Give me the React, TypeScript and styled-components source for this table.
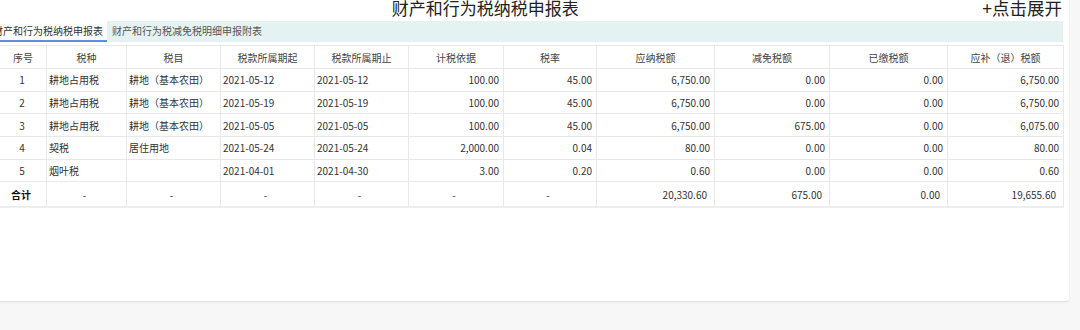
import styled, { createGlobalStyle } from "styled-components";

const GlobalStyle = createGlobalStyle`
  html, body {
    margin: 0;
    padding: 0;
    background: #f7f7f7;
    overflow: hidden;
  }
  body {
    font-family: "Noto Sans CJK SC", "Noto Sans", sans-serif;
    color: #333333;
  }
`;

type Align = "left" | "center" | "right";

interface Column {
  title: string;
  width: number;
  align: Align;
}

const columns: Column[] = [
  { title: "序号", width: 47, align: "center" },
  { title: "税种", width: 80, align: "left" },
  { title: "税目", width: 94, align: "left" },
  { title: "税款所属期起", width: 94, align: "left" },
  { title: "税款所属期止", width: 94, align: "left" },
  { title: "计税依据", width: 95, align: "right" },
  { title: "税率", width: 93, align: "right" },
  { title: "应纳税额", width: 118, align: "right" },
  { title: "减免税额", width: 115, align: "right" },
  { title: "已缴税额", width: 118, align: "right" },
  { title: "应补（退）税额", width: 116, align: "right" },
];

const rows: string[][] = [
  ["1", "耕地占用税", "耕地（基本农田）", "2021-05-12", "2021-05-12", "100.00", "45.00", "6,750.00", "0.00", "0.00", "6,750.00"],
  ["2", "耕地占用税", "耕地（基本农田）", "2021-05-19", "2021-05-19", "100.00", "45.00", "6,750.00", "0.00", "0.00", "6,750.00"],
  ["3", "耕地占用税", "耕地（基本农田）", "2021-05-05", "2021-05-05", "100.00", "45.00", "6,750.00", "675.00", "0.00", "6,075.00"],
  ["4", "契税", "居住用地", "2021-05-24", "2021-05-24", "2,000.00", "0.04", "80.00", "0.00", "0.00", "80.00"],
  ["5", "烟叶税", "", "2021-04-01", "2021-04-30", "3.00", "0.20", "0.60", "0.00", "0.00", "0.60"],
];

const totals = ["合计", "-", "-", "-", "-", "-", "-", "20,330.60", "675.00", "0.00", "19,655.60"];

const App = () => {
  return (
    <>
      <GlobalStyle />
      <Page>
        <Panel>
          <TitleRow>
            <Title>财产和行为税纳税申报表</Title>
            <Expand>+点击展开</Expand>
          </TitleRow>

          <TabBar>
            <Tab $active>财产和行为税纳税申报表</Tab>
            <Tab>财产和行为税减免税明细申报附表</Tab>
          </TabBar>

          <Table>
            <colgroup>
              {columns.map((c) => (
                <col key={c.title} style={{ width: c.width }} />
              ))}
            </colgroup>
            <thead>
              <tr>
                {columns.map((c) => (
                  <HeadCell key={c.title}>{c.title}</HeadCell>
                ))}
              </tr>
            </thead>
            <tbody>
              {rows.map((row) => (
                <tr key={row[0]}>
                  {row.map((v, i) => (
                    <Cell key={i} $align={columns[i].align}>
                      {v}
                    </Cell>
                  ))}
                </tr>
              ))}
              <tr>
                {totals.map((v, i) => (
                  <TotalCell
                    key={i}
                    $align={v === "-" || i === 0 ? "center" : "right"}
                    $bold={i === 0}
                  >
                    {v}
                  </TotalCell>
                ))}
              </tr>
            </tbody>
          </Table>
        </Panel>
      </Page>
    </>
  );
};

export default App;

const Page = styled.div`
  width: 1080px;
  height: 330px;
  background: #f7f7f7;
`;

const Panel = styled.div`
  box-sizing: border-box;
  width: 1081px;
  height: 307px;
  margin: -6px 0 0 -12px;
  padding: 0 6px 0 0;
  background: #ffffff;
  border-radius: 0 0 3px 3px;
  box-shadow: 0 1px 2px rgba(0, 0, 0, 0.12);
`;

const TitleRow = styled.div`
  display: grid;
  grid-template-columns: 1fr auto;
  column-gap: 12px;
  height: 27px;
  padding: 0 1px 0 12px;
  font-size: 17px;
  line-height: 27px;
  color: #222222;
`;

const Title = styled.div`
  text-align: center;
`;

const Expand = styled.div`
  font-size: 17.5px;
  cursor: pointer;
`;

const TabBar = styled.div`
  display: flex;
  height: 21px;
  background: #e5f2f2;
`;

const Tab = styled.div<{ $active?: boolean }>`
  box-sizing: border-box;
  height: 21px;
  padding: 0 4px 0 5px;
  font-size: 10px;
  line-height: 20px;
  white-space: nowrap;
  color: ${(p) => (p.$active ? "#333333" : "#555555")};
  background: ${(p) => (p.$active ? "#ffffff" : "transparent")};
  border-bottom: 2px solid ${(p) => (p.$active ? "#5b8fe0" : "transparent")};
`;

const Table = styled.table`
  table-layout: fixed;
  width: 1064px;
  margin: 3px 0 0 11px;
  border-collapse: collapse;
  font-size: 10px;
`;

const HeadCell = styled.th`
  height: 22px;
  padding: 0 4px;
  border: 1px solid #e8e8e8;
  font-weight: 400;
  text-align: center;
  color: #444444;
  white-space: nowrap;
`;

const Cell = styled.td<{ $align: Align }>`
  height: 21.7px;
  padding: 0 4px 0 2px;
  border: 1px solid #e8e8e8;
  text-align: ${(p) => p.$align};
  color: #333333;
  white-space: nowrap;
`;

const TotalCell = styled.td<{ $align: Align; $bold?: boolean }>`
  height: 23.5px;
  padding: 0 7px 0 3px;
  border: 1px solid #e8e8e8;
  border-bottom: 2px solid #eeeeee;
  text-align: ${(p) => p.$align};
  font-weight: ${(p) => (p.$bold ? 700 : 400)};
  color: ${(p) => (p.$bold ? "#111111" : "#333333")};
  white-space: nowrap;
`;
